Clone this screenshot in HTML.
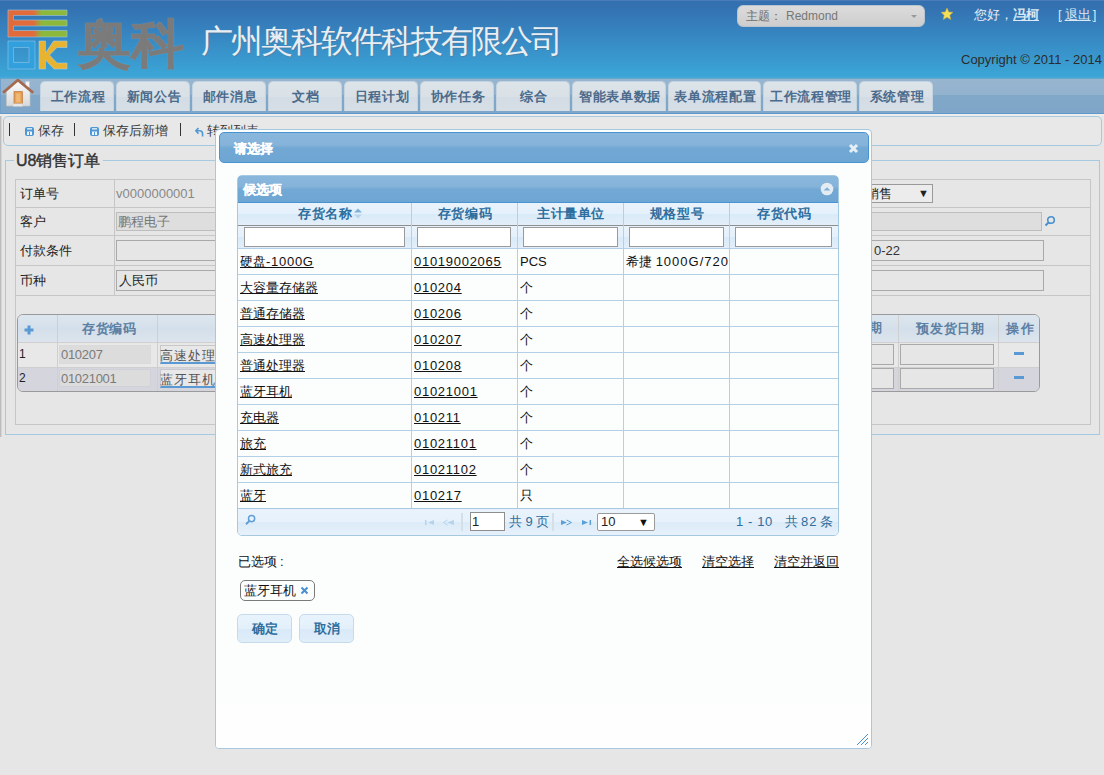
<!DOCTYPE html>
<html><head><meta charset="utf-8">
<style>
*{box-sizing:border-box}
html,body{margin:0;padding:0}
body{width:1104px;height:775px;overflow:hidden;position:relative;background:#e6e6e6;font-family:"Liberation Sans",sans-serif;font-size:13px;color:#222}
.a{position:absolute}
#hd{left:0;top:0;width:1104px;height:79px;background:linear-gradient(#3470b0 0%,#3471b1 8%,#378ac4 50%,#3ba6d7 97%,#6aa8cf 100%);border-top:1px solid #4a7cb7}
#nav{left:0;top:79px;width:1104px;height:35px;background:linear-gradient(#97b5cf 0,#93b2ce 46%,#82a8c8 48%,#7fa6c8 100%);border-bottom:1px solid #5f98cb;border-left:1px solid #6f9fcb}
#navw{left:0;top:114px;width:1104px;height:2px;background:#efedeb}
.tab{position:absolute;top:81px;height:30px;background:linear-gradient(#dce3e9 0,#d9e0e6 50%,#d3dce4 52%,#d6dee6 100%);border:1px solid #c3d3e0;border-bottom:none;border-radius:5px 5px 0 0;font-weight:bold;color:#4b6b8c;text-align:center;line-height:30px;font-size:13px;letter-spacing:0.7px;text-indent:2px}
#tb{left:3px;top:116px;width:1099px;height:30px;border:1px solid #a6c9e2;border-radius:5px;background:#e8e8e8}
.sep{position:absolute;top:123px;width:1px;height:13px;background:#333}
.tbt{position:absolute;top:123px;font-size:13px;color:#383838;line-height:15px}
.save{position:absolute;top:127px;width:9px;height:9px;background:#4a90d0;border-radius:2px}
.save:before{content:"";position:absolute;left:2px;top:1px;width:5px;height:2px;background:#dfeffc}
.save:after{content:"";position:absolute;left:2px;top:5px;width:5px;height:3px;background:#dfeffc}
#fs{left:5px;top:160px;width:1095px;height:275px;border:1px solid #a6c9e2}
#legend{left:14px;top:151px;padding:0 3px 0 2px;background:#e6e6e6;font-size:16px;font-weight:normal;-webkit-text-stroke:0.4px #333;color:#333;line-height:20px}
.hl{position:absolute;height:1px;background:#c6c6c6}
.vl{position:absolute;width:1px;background:#c6c6c6}
.lbl{position:absolute;left:20px;font-size:13px;color:#222;line-height:15px}
.inp{position:absolute;border:1px solid #a9a9a9;background:#e6e6e6}
.dis{background:#dedede;border-color:#bdbdbd}
.hdr{background:linear-gradient(#8ab7dc 0%,#86b3da 40%,#72a8d4 52%,#6ea6d3 100%);border:1px solid #4a93d3}
.gh{text-align:center;letter-spacing:0.6px;padding-left:2px;font-size:13px;font-weight:bold;color:#2e6e9e;line-height:15px}
.fi{height:20px;border:1px solid #9a9a9a;background:#fff}
.cell{font-size:13px;color:#111;line-height:15px;white-space:nowrap}
.u{text-decoration:underline}
.dg{letter-spacing:0.72px}
.pg{font-size:13px;color:#2e6e9e;line-height:15px;white-space:nowrap}
.btn{height:29px;border:1px solid #c5dbec;border-radius:5px;background:linear-gradient(#e8f3fc 0%,#e3f0fb 50%,#d8e9f8 51%,#e0eefa 100%);font-weight:bold;color:#2e6e9e;text-align:center;line-height:27px;font-size:13px}
</style></head>
<body>
<!-- header -->
<div id="hd" class="a"></div>
<svg class="a" style="left:0;top:0" width="80" height="78" viewBox="0 0 80 78">
 <defs><linearGradient id="eg" x1="0" x2="1" y1="0" y2="0"><stop offset="0" stop-color="#e26b3c"/><stop offset="0.43" stop-color="#e26b3c"/><stop offset="0.57" stop-color="#8cb83b"/><stop offset="1" stop-color="#8cb83b"/></linearGradient></defs>
 <path d="M8 10H67V15.5H13.5V20H67V26H13.5V30.5H67V37H8Z" fill="url(#eg)" stroke="#9cc6e6" stroke-width="0.6"/>
 <path d="M8 41H35V69H8ZM13.5 47.5V62.5H29V47.5Z" fill="#31a0dc" fill-rule="evenodd" stroke="#8fc8ec" stroke-width="0.6"/>
 <path d="M39 41H45.5V53L53.5 41H67V47.5H57L49.5 55L57 63H67V69H54L45.5 60V69H39Z" fill="#e8b430" stroke="#a9cde6" stroke-width="0.6"/>
</svg>
<div class="a" style="left:78px;top:11px;font-size:53px;font-weight:bold;color:#7b7b7b;line-height:66px;letter-spacing:0px;-webkit-text-stroke:0.5px #7b7b7b;text-shadow:0 0 1px rgba(200,215,230,.7)">奥科</div>
<div class="a" style="left:201px;top:20px;font-size:32px;color:#e9eef4;line-height:42px;letter-spacing:-2px;text-shadow:1px 1px 0 rgba(90,110,130,.5)">广州奥科软件科技有限公司</div>
<div class="a" style="left:737px;top:5px;width:188px;height:22px;border-radius:6px;background:linear-gradient(#dcdcdc,#cdcdcd);border:1px solid #b8c4cf"></div>
<div class="a" style="left:746px;top:8px;font-size:12px;color:#6b6b6b;line-height:16px">主题：</div>
<div class="a" style="left:786px;top:8px;font-size:12px;color:#777;line-height:16px">Redmond</div>
<div class="a" style="left:911px;top:15px;width:0;height:0;border-left:3px solid transparent;border-right:3px solid transparent;border-top:3px solid #999"></div>
<svg class="a" style="left:940px;top:7px" width="14" height="14" viewBox="0 0 14 14"><path d="M7 1L8.8 5L13 5.3L9.8 8.2L10.8 12.6L7 10.3L3.2 12.6L4.2 8.2L1 5.3L5.2 5Z" fill="#f3e05a" stroke="#c9a83a" stroke-width="0.6"/></svg>
<div class="a" style="left:974px;top:7px;font-size:13px;color:#e8eef5;line-height:16px">您好，<b style="text-decoration:underline;color:#dde8f4">冯柯</b></div>
<div class="a" style="left:1058px;top:7px;font-size:13px;color:#dde8f4;line-height:16px;text-decoration:underline">[<span style="margin:0 2px 0 3px">退出</span>]</div>
<div class="a" style="left:961px;top:52px;font-size:13px;color:#2c2c2c;line-height:16px">Copyright © 2011 - 2014</div>

<!-- nav -->
<div id="nav" class="a"></div><div id="navw" class="a"></div>
<svg class="a" style="left:2px;top:79px" width="34" height="30" viewBox="0 0 34 30">
 <defs><linearGradient id="hw" x1="0" y1="0" x2="0" y2="1"><stop offset="0" stop-color="#fafafa"/><stop offset="1" stop-color="#d9d9d9"/></linearGradient></defs>
 <rect x="23.5" y="2.4" width="3.8" height="6" fill="#f4f4f4" stroke="#c9c9c9" stroke-width="0.5"/>
 <path d="M4.5 12.5L15.9 2.5L28 12.5V27H4.5Z" fill="url(#hw)" stroke="#c4c4c4" stroke-width="0.6"/>
 <path d="M1 13.8L15.9 1L31.2 13.8" fill="none" stroke="#a5694e" stroke-width="2.6" stroke-linejoin="miter"/>
 <rect x="12.1" y="12.7" width="8.2" height="12" fill="#e9a455" stroke="#c27a3c" stroke-width="0.9"/>
 <rect x="14.2" y="14.5" width="4" height="8.5" fill="#f0b878"/>
 <rect x="11" y="24.7" width="9.8" height="2.7" fill="#e6e6e6" stroke="#c8c8c8" stroke-width="0.4"/>
</svg>
<div class="tab" style="left:40px;width:74px">工作流程</div>
<div class="tab" style="left:116px;width:74px">新闻公告</div>
<div class="tab" style="left:192px;width:74px">邮件消息</div>
<div class="tab" style="left:268px;width:74px">文档</div>
<div class="tab" style="left:344px;width:74px">日程计划</div>
<div class="tab" style="left:420px;width:74px">协作任务</div>
<div class="tab" style="left:496px;width:74px">综合</div>
<div class="tab" style="left:572px;width:94px">智能表单数据</div>
<div class="tab" style="left:668px;width:93px">表单流程配置</div>
<div class="tab" style="left:763px;width:94px">工作流程管理</div>
<div class="tab" style="left:859px;width:74px">系统管理</div>

<!-- toolbar -->
<div class="a" style="left:0;top:116px;width:1px;height:321px;background:#bcbcbc"></div><div class="a" style="left:1px;top:116px;width:1px;height:321px;background:#d6d6d6"></div>
<div id="tb" class="a"></div>
<div class="sep" style="left:9px"></div>
<svg class="a" style="left:25px;top:127px" width="9" height="9" viewBox="0 0 9 9"><rect x="0" y="0" width="9" height="9" rx="2" fill="#4f97d4"/><rect x="2" y="1" width="5" height="1.6" fill="#cfe3f3"/><rect x="2" y="4.5" width="5" height="3.5" fill="#eef5fb"/><rect x="4" y="5" width="1" height="3" fill="#4f97d4"/></svg>
<div class="tbt" style="left:38px">保存</div>
<div class="sep" style="left:74px"></div>
<svg class="a" style="left:90px;top:127px" width="9" height="9" viewBox="0 0 9 9"><rect x="0" y="0" width="9" height="9" rx="2" fill="#4f97d4"/><rect x="2" y="1" width="5" height="1.6" fill="#cfe3f3"/><rect x="2" y="4.5" width="5" height="3.5" fill="#eef5fb"/><rect x="4" y="5" width="1" height="3" fill="#4f97d4"/></svg>
<div class="tbt" style="left:103px">保存后新增</div>
<div class="sep" style="left:180px"></div>
<svg class="a" style="left:195px;top:127px" width="9" height="10" viewBox="0 0 9 10"><path d="M3.5 1L0.8 3.8L3.5 6.6" fill="none" stroke="#4f97d4" stroke-width="1.6"/><path d="M1.2 3.8H4.5Q7.6 3.8 7.6 7V9.5" fill="none" stroke="#4f97d4" stroke-width="1.6"/></svg>
<div class="tbt" style="left:207px">转到列表</div>

<!-- fieldset -->
<div id="fs" class="a"></div>
<div id="legend" class="a">U8销售订单</div>
<!-- form table -->
<div class="a" style="left:15px;top:179px;width:1076px;height:246px;border:1px solid #c6c6c6"></div>
<div class="hl" style="left:15px;top:207px;width:1076px"></div>
<div class="hl" style="left:15px;top:235px;width:1076px"></div>
<div class="hl" style="left:15px;top:265px;width:1076px"></div>
<div class="hl" style="left:15px;top:295px;width:1076px"></div>
<div class="vl" style="left:114px;top:179px;height:116px"></div>
<div class="lbl" style="top:186px">订单号</div>
<div class="lbl" style="top:214px">客户</div>
<div class="lbl" style="top:243px">付款条件</div>
<div class="lbl" style="top:273px">币种</div>
<div class="a" style="left:116px;top:186px;font-size:13px;color:#888;line-height:15px">v0000000001</div>
<div class="inp dis" style="left:116px;top:212px;width:926px;height:19px"></div>
<div class="a" style="left:118px;top:214px;font-size:13px;color:#777;line-height:15px">鹏程电子</div>
<div class="inp" style="left:116px;top:240px;width:928px;height:21px"></div>
<div class="inp" style="left:116px;top:270px;width:928px;height:21px"></div>
<div class="a" style="left:119px;top:273px;font-size:13px;color:#222;line-height:15px">人民币</div>
<div class="a" style="left:874px;top:243px;font-size:13px;color:#333;line-height:15px">0-22</div>
<div class="inp" style="left:790px;top:184px;width:143px;height:19px;background:#ececec;border-color:#9a9a9a"></div>
<div class="a" style="left:866px;top:186px;font-size:13px;color:#222;line-height:15px">销售</div>
<div class="a" style="left:918px;top:186px;font-size:11px;color:#222;line-height:15px">▼</div>
<svg class="a" style="left:1044px;top:215px" width="12" height="12" viewBox="0 0 12 12"><circle cx="7" cy="5" r="3.3" fill="none" stroke="#4a90d0" stroke-width="1.6"/><path d="M4.8 7.2L1.5 10.5" stroke="#4a90d0" stroke-width="2"/></svg>
<!-- grid -->
<div class="a" style="left:17px;top:314px;width:1023px;height:78px;border:1px solid #9a9a9a;border-radius:6px;overflow:hidden;background:#e8e8e8">
 <div class="a" style="left:0;top:0;width:1023px;height:28px;background:linear-gradient(#dde6ee,#d3dfea 50%,#dde6ee)"></div>
 <div class="a" style="left:0;top:52px;width:1023px;height:25px;background:#d5d5dd"></div>
</div>
<div class="hl" style="left:18px;top:342px;width:1021px;background:#cfcfcf"></div>
<div class="hl" style="left:18px;top:367px;width:1021px;background:#cfcfcf"></div>
<div class="vl" style="left:57px;top:315px;height:76px;background:#cfcfcf"></div>
<div class="vl" style="left:157px;top:315px;height:76px;background:#cfcfcf"></div>
<div class="vl" style="left:898px;top:315px;height:76px;background:#cfcfcf"></div>
<div class="vl" style="left:998px;top:315px;height:76px;background:#cfcfcf"></div>
<svg class="a" style="left:24px;top:325px" width="10" height="10" viewBox="0 0 10 10"><path d="M5 0.5V9.5M0.5 5H9.5" stroke="#5a9ad4" stroke-width="3"/></svg>
<div class="a" style="left:82px;top:321px;font-size:13px;font-weight:bold;color:#5c7fa4;line-height:15px;letter-spacing:0.7px">存货编码</div>
<div class="a" style="left:869px;top:320px;font-size:13px;font-weight:bold;color:#5c7fa4;line-height:15px">期</div>
<div class="a" style="left:916px;top:321px;font-size:13px;font-weight:bold;color:#5c7fa4;line-height:15px;letter-spacing:0.8px">预发货日期</div>
<div class="a" style="left:1006px;top:321px;font-size:13px;font-weight:bold;color:#5c7fa4;line-height:15px;letter-spacing:2px">操作</div>
<div class="a" style="left:19px;top:347px;font-size:12px;color:#222;line-height:14px">1</div>
<div class="a" style="left:19px;top:371px;font-size:12px;color:#222;line-height:14px">2</div>
<div class="inp dis" style="left:59px;top:345px;width:92px;height:19px;background:#dcdcdc;border-color:#dadada"></div>
<div class="inp dis" style="left:59px;top:369px;width:92px;height:18px;background:#dcdcdc;border-color:#d0d0d8"></div>
<div class="a" style="left:61px;top:347px;font-size:13px;letter-spacing:-0.3px;color:#7a7a7a;line-height:15px">010207</div>
<div class="a" style="left:61px;top:371px;font-size:13px;letter-spacing:-0.3px;color:#7a7a7a;line-height:15px">01021001</div>
<div class="a" style="left:160px;top:345px;width:60px;height:19px;border:1px solid #c8c8c8;border-bottom:2px solid #5a9ad4;background:#e8e8e8"></div>
<div class="a" style="left:160px;top:369px;width:60px;height:19px;border:1px solid #c8c8d0;border-bottom:2px solid #5a9ad4;background:#e8e8e8"></div>
<div class="a" style="left:160px;top:348px;font-size:13px;letter-spacing:1px;color:#555;line-height:15px;white-space:nowrap">高速处理器</div>
<div class="a" style="left:160px;top:372px;font-size:13px;letter-spacing:1px;color:#555;line-height:15px;white-space:nowrap">蓝牙耳机</div>
<div class="inp" style="left:860px;top:344px;width:34px;height:21px"></div>
<div class="inp" style="left:860px;top:368px;width:34px;height:21px"></div>
<div class="inp" style="left:900px;top:344px;width:94px;height:21px"></div>
<div class="inp" style="left:900px;top:368px;width:94px;height:21px"></div>
<div class="a" style="left:1014px;top:352px;width:10px;height:3px;background:#5a9ad4"></div>
<div class="a" style="left:1014px;top:376px;width:10px;height:3px;background:#5a9ad4"></div>


<!-- dialog -->
<div class="a" style="left:215px;top:129px;width:657px;height:620px;border:1px solid #a6c9e2;border-radius:4px;background:#fcfdfd"></div>
<div class="a" style="left:216px;top:703px;width:655px;height:45px;border-radius:0 0 3px 3px;background:#fefefe"></div>
<div class="a hdr" style="left:219px;top:132px;width:650px;height:31px;border-radius:5px"></div>
<div class="a" style="left:234px;top:141px;font-size:13px;font-weight:bold;color:#fff;line-height:15px;-webkit-text-stroke:0.3px #fff">请选择</div>
<svg class="a" style="left:848px;top:143px" width="11" height="11" viewBox="0 0 11 11"><path d="M2 2L9 9M9 2L2 9" stroke="#e6eef6" stroke-width="3"/></svg>
<div class="a" style="left:237px;top:175px;width:602px;height:361px;border:1px solid #a6c9e2;border-radius:5px;background:#fcfdfd;overflow:hidden">
 <div class="a hdr" style="left:-1px;top:-1px;width:602px;height:28px;border-radius:5px 5px 0 0"></div>
 <div class="a" style="left:0;top:27px;width:600px;height:22px;background:linear-gradient(#e9f3fc 0%,#e4f0fb 50%,#d9eaf8 51%,#e3effa 100%)"></div>
 <div class="a" style="left:0;top:49px;width:600px;height:1px;background:#8e8e8e"></div>
 <div class="a" style="left:0;top:50px;width:600px;height:22px;background:linear-gradient(#e9f3fc 0%,#e4f0fb 50%,#d9eaf8 51%,#e3effa 100%)"></div>
 <div class="a" style="left:0;top:332px;width:600px;height:27px;background:linear-gradient(#eaf3fc 0%,#e6f1fb 50%,#dcebf8 51%,#e6f1fb 100%);border-top:1px solid #a6c9e2"></div>
</div>
<div class="a" style="left:243px;top:182px;font-size:13px;font-weight:bold;color:#fff;line-height:15px;-webkit-text-stroke:0.3px #fff">候选项</div>
<svg class="a" style="left:820px;top:182px" width="14" height="14" viewBox="0 0 14 14"><circle cx="7" cy="7" r="6.3" fill="#e4ecf3"/><path d="M3.5 8.6L7 5.2L10.5 8.6Z" fill="#7fb0da"/></svg>
<div class="vl" style="left:411px;top:203px;height:305px;background:#b3d0e6"></div>
<div class="vl" style="left:517px;top:203px;height:305px;background:#b3d0e6"></div>
<div class="vl" style="left:623px;top:203px;height:305px;background:#b3d0e6"></div>
<div class="vl" style="left:729px;top:203px;height:305px;background:#b3d0e6"></div>
<div class="a gh" style="left:238px;top:206px;width:173px">存货名称</div>
<div class="a gh" style="left:411px;top:206px;width:106px">存货编码</div>
<div class="a gh" style="left:517px;top:206px;width:106px">主计量单位</div>
<div class="a gh" style="left:623px;top:206px;width:106px">规格型号</div>
<div class="a gh" style="left:729px;top:206px;width:109px">存货代码</div>
<svg class="a" style="left:353px;top:208px" width="10" height="11" viewBox="0 0 10 11"><path d="M1 4.5L5 0.5L9 4.5Z" fill="#7fb0da"/><path d="M1 6.5L5 10.5L9 6.5Z" fill="#b9d5ec"/></svg>
<div class="a fi" style="left:244px;top:227px;width:161px"></div>
<div class="a fi" style="left:417px;top:227px;width:94px"></div>
<div class="a fi" style="left:523px;top:227px;width:95px"></div>
<div class="a fi" style="left:629px;top:227px;width:95px"></div>
<div class="a fi" style="left:735px;top:227px;width:97px"></div>
<div class="a cell u" style="left:240px;top:254px">硬盘<span class="dg">-1000G</span></div>
<div class="a cell u dg" style="left:414px;top:254px">01019002065</div>
<div class="a cell" style="left:520px;top:254px">PCS</div>
<div class="a cell" style="left:626px;top:254px">希捷 <span style="letter-spacing:1px">1000G/720</span></div>
<div class="hl" style="left:238px;top:274px;width:600px;background:#b3d0e6"></div>
<div class="a cell u" style="left:240px;top:280px">大容量存储器</div>
<div class="a cell u dg" style="left:414px;top:280px">010204</div>
<div class="a cell" style="left:520px;top:280px">个</div>
<div class="hl" style="left:238px;top:300px;width:600px;background:#b3d0e6"></div>
<div class="a cell u" style="left:240px;top:306px">普通存储器</div>
<div class="a cell u dg" style="left:414px;top:306px">010206</div>
<div class="a cell" style="left:520px;top:306px">个</div>
<div class="hl" style="left:238px;top:326px;width:600px;background:#b3d0e6"></div>
<div class="a cell u" style="left:240px;top:332px">高速处理器</div>
<div class="a cell u dg" style="left:414px;top:332px">010207</div>
<div class="a cell" style="left:520px;top:332px">个</div>
<div class="hl" style="left:238px;top:352px;width:600px;background:#b3d0e6"></div>
<div class="a cell u" style="left:240px;top:358px">普通处理器</div>
<div class="a cell u dg" style="left:414px;top:358px">010208</div>
<div class="a cell" style="left:520px;top:358px">个</div>
<div class="hl" style="left:238px;top:378px;width:600px;background:#b3d0e6"></div>
<div class="a cell u" style="left:240px;top:384px">蓝牙耳机</div>
<div class="a cell u dg" style="left:414px;top:384px">01021001</div>
<div class="a cell" style="left:520px;top:384px">个</div>
<div class="hl" style="left:238px;top:404px;width:600px;background:#b3d0e6"></div>
<div class="a cell u" style="left:240px;top:410px">充电器</div>
<div class="a cell u dg" style="left:414px;top:410px">010211</div>
<div class="a cell" style="left:520px;top:410px">个</div>
<div class="hl" style="left:238px;top:430px;width:600px;background:#b3d0e6"></div>
<div class="a cell u" style="left:240px;top:436px">旅充</div>
<div class="a cell u dg" style="left:414px;top:436px">01021101</div>
<div class="a cell" style="left:520px;top:436px">个</div>
<div class="hl" style="left:238px;top:456px;width:600px;background:#b3d0e6"></div>
<div class="a cell u" style="left:240px;top:462px">新式旅充</div>
<div class="a cell u dg" style="left:414px;top:462px">01021102</div>
<div class="a cell" style="left:520px;top:462px">个</div>
<div class="hl" style="left:238px;top:482px;width:600px;background:#b3d0e6"></div>
<div class="a cell u" style="left:240px;top:488px">蓝牙</div>
<div class="a cell u dg" style="left:414px;top:488px">010217</div>
<div class="a cell" style="left:520px;top:488px">只</div>
<div class="hl" style="left:238px;top:248px;width:600px;background:#b3d0e6"></div>
<svg class="a" style="left:244px;top:514px" width="12" height="12" viewBox="0 0 12 12"><circle cx="7.6" cy="4.6" r="3.1" fill="none" stroke="#5f9fd6" stroke-width="1.5"/><path d="M5.5 6.8L2 10.2" stroke="#5f9fd6" stroke-width="2"/></svg>



<svg class="a" style="left:424px;top:519px" width="32" height="8" viewBox="0 0 32 8"><rect x="1" y="1" width="1.5" height="5" fill="#b5d3ec"/><path d="M4 3.5L10 1V6Z" fill="#b5d3ec"/><path d="M23 3.5L30 1V6Z" fill="#b5d3ec"/><path d="M23.5 1L19.5 3.5L23.5 6" fill="none" stroke="#b5d3ec" stroke-width="1"/></svg>
<div class="a" style="left:461px;top:513px;width:2px;height:18px;background:#d6dfe7"></div>
<div class="a" style="left:552px;top:513px;width:2px;height:18px;background:#d6dfe7"></div>
<svg class="a" style="left:560px;top:519px" width="32" height="8" viewBox="0 0 32 8"><path d="M1 1V6L7 3.5Z" fill="#5a9fd6"/><path d="M6.5 1L11.5 3.5L6.5 6" fill="none" stroke="#5a9fd6" stroke-width="1"/><path d="M22 1V6L28 3.5Z" fill="#5a9fd6"/><rect x="29.6" y="1" width="1.5" height="5" fill="#5a9fd6"/></svg>
<div class="a" style="left:470px;top:512px;width:35px;height:19px;border:1px solid #8e8e8e;background:#fff"></div>
<div class="a" style="left:472px;top:514px;font-size:13px;color:#222;line-height:15px">1</div>
<div class="a pg" style="left:509px;top:514px">共 9 页</div>



<div class="a" style="left:597px;top:513px;width:58px;height:18px;border:1px solid #9a9a9a;border-radius:2px;background:#fff"></div>
<div class="a" style="left:601px;top:514px;font-size:13px;color:#222;line-height:15px">10</div>
<div class="a" style="left:638px;top:515px;font-size:11px;color:#111;line-height:14px">▼</div>
<div class="a pg" style="left:736px;top:514px;letter-spacing:0.6px">1 - 10</div><div class="a pg" style="left:785px;top:514px">共</div><div class="a pg" style="left:801px;top:514px;letter-spacing:1px">82</div><div class="a pg" style="left:820px;top:514px">条</div>
<div class="a" style="left:238px;top:554px;font-size:13px;color:#111;line-height:15px">已选项<span style="margin-left:3px">:</span></div>
<div class="a u" style="left:617px;top:554px;font-size:13px;color:#111;line-height:15px">全选候选项</div>
<div class="a u" style="left:702px;top:554px;font-size:13px;color:#111;line-height:15px">清空选择</div>
<div class="a u" style="left:774px;top:554px;font-size:13px;color:#111;line-height:15px">清空并返回</div>
<div class="a" style="left:240px;top:580px;width:75px;height:21px;border:1px solid #7a7a7a;border-radius:5px;background:#fcfdfd"></div>
<div class="a" style="left:244px;top:583px;font-size:13px;color:#111;line-height:15px">蓝牙耳机</div>
<svg class="a" style="left:300px;top:586px" width="9" height="9" viewBox="0 0 9 9"><path d="M1.5 1.5L7.5 7.5M7.5 1.5L1.5 7.5" stroke="#4a90d0" stroke-width="2"/></svg>
<div class="a btn" style="left:237px;top:614px;width:55px">确定</div>
<div class="a btn" style="left:299px;top:614px;width:55px">取消</div>
<svg class="a" style="left:855px;top:732px" width="15" height="15" viewBox="0 0 15 15"><path d="M2 13L13 2M6 13L13 6M10 13L13 10" stroke="#4a90d0" stroke-width="1" /></svg>
</body></html>
